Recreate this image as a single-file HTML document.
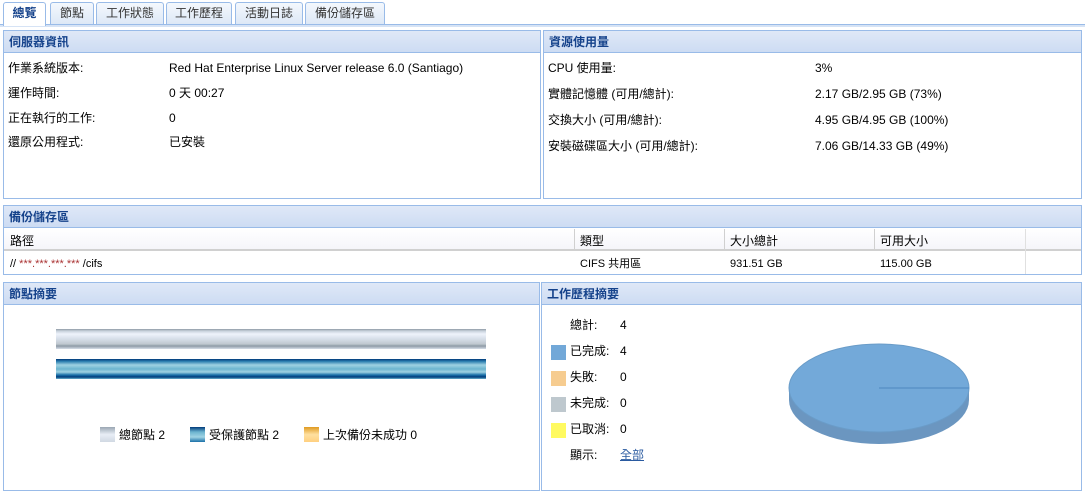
<!DOCTYPE html>
<html><head><meta charset="utf-8"><style>
*{box-sizing:border-box;margin:0;padding:0}
body{width:1085px;height:497px;background:#fff;font-family:"Liberation Sans","Noto Sans CJK TC",sans-serif;font-size:12px;color:#000;position:relative;overflow:hidden}
.abs{position:absolute}
.tab{position:absolute;top:2px;height:22px;border:1px solid #99bbe8;border-bottom:none;background:linear-gradient(#f4f8fd,#dde8f6);color:#333;font-size:12px;line-height:20px;text-align:center;border-radius:3px 3px 0 0}
.tab.act{background:#fff;font-weight:bold;color:#15428b;height:24px}
.panel{position:absolute;border:1px solid #99bbe8;background:#fff}
.hd{height:22px;background:linear-gradient(#dfe8f7,#cddcf3);border-bottom:1px solid #99bbe8;color:#15428b;font-weight:bold;font-size:12px;line-height:22px;padding-left:5px}
.t{position:absolute;white-space:nowrap;line-height:14px;height:14px}
.sw{position:absolute;width:15px;height:15px}
</style></head><body>
<div class="abs" style="left:0;top:24px;width:1085px;height:3px;border-top:1px solid #99bbe8;background:#d6e3f5"></div>
<div class="tab act" style="left:3px;width:43px">總覽</div>
<div class="tab" style="left:50px;width:44px">節點</div>
<div class="tab" style="left:96px;width:68px">工作狀態</div>
<div class="tab" style="left:166px;width:66px">工作歷程</div>
<div class="tab" style="left:235px;width:68px">活動日誌</div>
<div class="tab" style="left:305px;width:80px">備份儲存區</div>

<div class="panel" style="left:3px;top:30px;width:538px;height:169px">
<div class="hd">伺服器資訊</div>
<div class="t" style="left:4px;top:30px">作業系統版本:</div><div class="t" style="left:165px;top:30px">Red Hat Enterprise Linux Server release 6.0 (Santiago)</div>
<div class="t" style="left:4px;top:55px">運作時間:</div><div class="t" style="left:165px;top:55px">0 天 00:27</div>
<div class="t" style="left:4px;top:80px">正在執行的工作:</div><div class="t" style="left:165px;top:80px">0</div>
<div class="t" style="left:4px;top:104px">還原公用程式:</div><div class="t" style="left:165px;top:104px">已安裝</div>
</div>

<div class="panel" style="left:543px;top:30px;width:539px;height:169px">
<div class="hd">資源使用量</div>
<div class="t" style="left:4px;top:30px">CPU 使用量:</div><div class="t" style="left:271px;top:30px">3%</div>
<div class="t" style="left:4px;top:56px">實體記憶體 (可用/總計):</div><div class="t" style="left:271px;top:56px">2.17 GB/2.95 GB (73%)</div>
<div class="t" style="left:4px;top:82px">交換大小 (可用/總計):</div><div class="t" style="left:271px;top:82px">4.95 GB/4.95 GB (100%)</div>
<div class="t" style="left:4px;top:108px">安裝磁碟區大小 (可用/總計):</div><div class="t" style="left:271px;top:108px">7.06 GB/14.33 GB (49%)</div>
</div>

<div class="panel" style="left:3px;top:205px;width:1079px;height:70px">
<div class="hd">備份儲存區</div>
<div class="abs" style="left:0;top:23px;width:1077px;height:22px;background:linear-gradient(#fff,#f5f5fa);border-bottom:2px solid #d0d0d0"></div>
<div class="abs" style="left:570px;top:23px;width:1px;height:21px;background:#d0d0d0"></div>
<div class="abs" style="left:720px;top:23px;width:1px;height:21px;background:#d0d0d0"></div>
<div class="abs" style="left:870px;top:23px;width:1px;height:21px;background:#d0d0d0"></div>
<div class="abs" style="left:1021px;top:23px;width:1px;height:45px;background:#e0e0e0"></div>
<div class="t" style="left:6px;top:28px">路徑</div>
<div class="t" style="left:576px;top:28px">類型</div>
<div class="t" style="left:726px;top:28px">大小總計</div>
<div class="t" style="left:876px;top:28px">可用大小</div>
<div class="t" style="left:6px;top:51px;font-size:11px">// <span style="color:#a33">***.***.***.***</span> /cifs</div>
<div class="t" style="left:576px;top:51px;font-size:11px">CIFS 共用區</div>
<div class="t" style="left:726px;top:51px;font-size:11px">931.51 GB</div>
<div class="t" style="left:876px;top:51px;font-size:11px">115.00 GB</div>
</div>

<div class="panel" style="left:3px;top:282px;width:537px;height:209px">
<div class="hd">節點摘要</div>
<div class="abs" style="left:52px;top:46px;width:430px;height:20px;background:linear-gradient(#8e9aa6 0,#c8d2dc 10%,#eef3fb 25%,#d6dee8 50%,#c0c8d0 75%,#8e9aa6 85%,#d6dee8 100%)"></div>
<div class="abs" style="left:52px;top:76px;width:430px;height:20px;background:linear-gradient(#003a7a 0,#2c7fb0 12%,#9fd2e2 30%,#6cb4cf 50%,#9fd2e2 65%,#1a70a8 80%,#003a7a 90%,#6cb4cf 100%)"></div>
<div class="sw" style="left:96px;top:144px;background:linear-gradient(#9aa6b2,#e8eef6,#d0d8e2)"></div>
<div class="t" style="left:115px;top:145px">總節點 2</div>
<div class="sw" style="left:186px;top:144px;background:linear-gradient(#003a7a,#6cb4cf,#a0d4e4,#1a70a8)"></div>
<div class="t" style="left:205px;top:145px">受保護節點 2</div>
<div class="sw" style="left:300px;top:144px;background:linear-gradient(#e09a20,#ffe0a0,#ffd080)"></div>
<div class="t" style="left:319px;top:145px">上次備份未成功 0</div>
</div>

<div class="panel" style="left:541px;top:282px;width:541px;height:209px">
<div class="hd">工作歷程摘要</div>
<div class="t" style="left:28px;top:35px">總計:</div><div class="t" style="left:78px;top:35px">4</div>
<div class="sw" style="left:9px;top:62px;background:#72a8d8"></div><div class="t" style="left:28px;top:61px">已完成:</div><div class="t" style="left:78px;top:61px">4</div>
<div class="sw" style="left:9px;top:88px;background:#f6cc90"></div><div class="t" style="left:28px;top:87px">失敗:</div><div class="t" style="left:78px;top:87px">0</div>
<div class="sw" style="left:9px;top:114px;background:#bec8ce"></div><div class="t" style="left:28px;top:113px">未完成:</div><div class="t" style="left:78px;top:113px">0</div>
<div class="sw" style="left:9px;top:140px;background:#fffa60"></div><div class="t" style="left:28px;top:139px">已取消:</div><div class="t" style="left:78px;top:139px">0</div>
<div class="t" style="left:28px;top:165px">顯示:</div><div class="t" style="left:78px;top:165px;color:#2a5aa0;text-decoration:underline">全部</div>
<svg class="abs" style="left:245px;top:58px" width="185" height="106">
<ellipse cx="92" cy="59" rx="90" ry="44" fill="#6b96c0"/>
<rect x="2" y="47" width="180" height="12" fill="#6b96c0"/>
<ellipse cx="92" cy="47" rx="90" ry="44" fill="#73a9d9" stroke="#6a9cc8" stroke-width="1"/>
<line x1="92" y1="47" x2="182" y2="47" stroke="#4d86c0" stroke-width="1"/>
</svg>
</div>
</body></html>
